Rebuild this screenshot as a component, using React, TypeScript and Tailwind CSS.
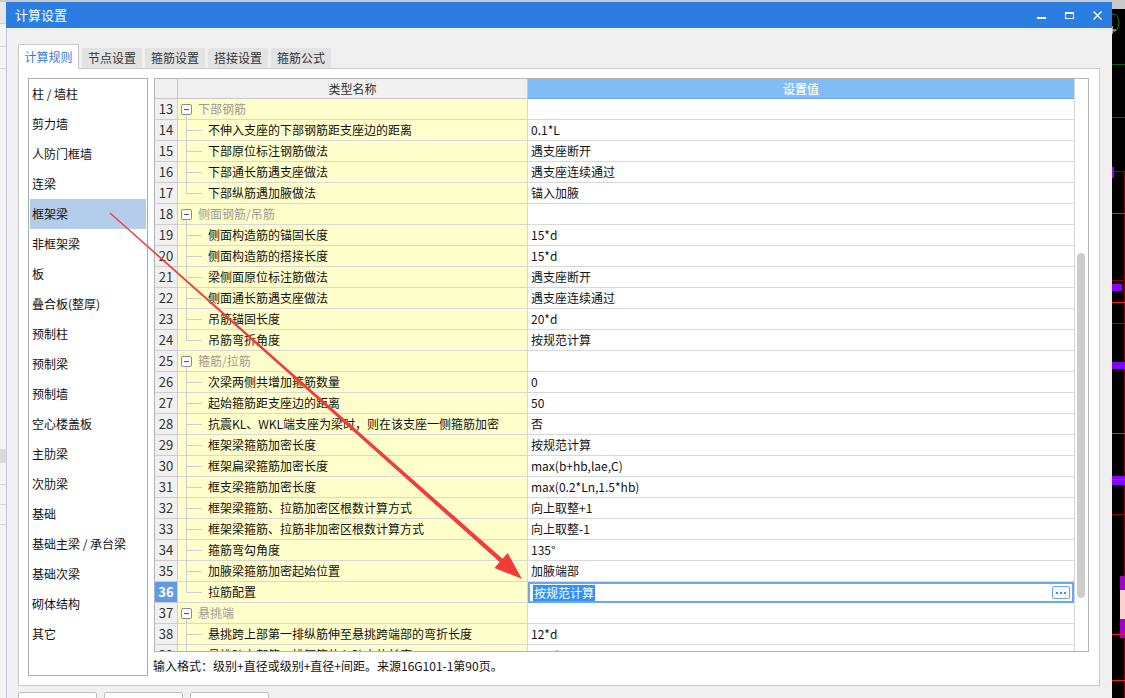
import React from 'react';

type Row = {
  n: number;
  name: string;
  value?: string;
  group?: boolean;
  last?: boolean;
  selected?: boolean;
};

const rows: Row[] = [
  { n: 13, name: '下部钢筋', group: true },
  { n: 14, name: '不伸入支座的下部钢筋距支座边的距离', value: '0.1*L' },
  { n: 15, name: '下部原位标注钢筋做法', value: '遇支座断开' },
  { n: 16, name: '下部通长筋遇支座做法', value: '遇支座连续通过' },
  { n: 17, name: '下部纵筋遇加腋做法', value: '锚入加腋', last: true },
  { n: 18, name: '侧面钢筋/吊筋', group: true },
  { n: 19, name: '侧面构造筋的锚固长度', value: '15*d' },
  { n: 20, name: '侧面构造筋的搭接长度', value: '15*d' },
  { n: 21, name: '梁侧面原位标注筋做法', value: '遇支座断开' },
  { n: 22, name: '侧面通长筋遇支座做法', value: '遇支座连续通过' },
  { n: 23, name: '吊筋锚固长度', value: '20*d' },
  { n: 24, name: '吊筋弯折角度', value: '按规范计算', last: true },
  { n: 25, name: '箍筋/拉筋', group: true },
  { n: 26, name: '次梁两侧共增加箍筋数量', value: '0' },
  { n: 27, name: '起始箍筋距支座边的距离', value: '50' },
  { n: 28, name: '抗震KL、WKL端支座为梁时，则在该支座一侧箍筋加密', value: '否' },
  { n: 29, name: '框架梁箍筋加密长度', value: '按规范计算' },
  { n: 30, name: '框架扁梁箍筋加密长度', value: 'max(b+hb,lae,C)' },
  { n: 31, name: '框支梁箍筋加密长度', value: 'max(0.2*Ln,1.5*hb)' },
  { n: 32, name: '框架梁箍筋、拉筋加密区根数计算方式', value: '向上取整+1' },
  { n: 33, name: '框架梁箍筋、拉筋非加密区根数计算方式', value: '向上取整-1' },
  { n: 34, name: '箍筋弯勾角度', value: '135°' },
  { n: 35, name: '加腋梁箍筋加密起始位置', value: '加腋端部' },
  { n: 36, name: '拉筋配置', value: '按规范计算', last: true, selected: true },
  { n: 37, name: '悬挑端', group: true },
  { n: 38, name: '悬挑跨上部第一排纵筋伸至悬挑跨端部的弯折长度', value: '12*d' },
  { n: 39, name: '悬挑跨上部第二排钢筋伸入跨内的长度', value: '0.75*L' },
];

const categories = [
  '柱 / 墙柱',
  '剪力墙',
  '人防门框墙',
  '连梁',
  '框架梁',
  '非框架梁',
  '板',
  '叠合板(整厚)',
  '预制柱',
  '预制梁',
  '预制墙',
  '空心楼盖板',
  '主肋梁',
  '次肋梁',
  '基础',
  '基础主梁 / 承台梁',
  '基础次梁',
  '砌体结构',
  '其它',
];

const tabs = ['计算规则', '节点设置', '箍筋设置', '搭接设置', '箍筋公式'];

function NameCell({ row }: { row: Row }) {
  if (row.group) {
    return (
      <div className="relative w-[350px] h-full bg-[#ffffcc] border-r border-b border-[#d8d8d8] pl-[20px] text-[#9a9a9a] leading-[20px]">
        <div className="absolute left-[3px] top-[5px] w-[11px] h-[11px] border border-[#8c8c8c] rounded-[2px] bg-white flex items-center justify-center">
          <div className="w-[5px] h-px bg-[#555]" />
        </div>
        <div className="absolute left-[8px] top-[16px] w-px h-[5px] bg-[#cfcfcf]" />
        {row.name}
      </div>
    );
  }
  return (
    <div className="relative w-[350px] h-full bg-[#ffffcc] border-r border-b border-[#d8d8d8] pl-[30px] text-[#111] leading-[20px] whitespace-nowrap">
      <div className={`absolute left-[8px] top-0 w-px bg-[#cfcfcf] ${row.last ? 'h-[10px]' : 'h-[21px]'}`} />
      <div className="absolute left-[8px] top-[10px] w-[16px] h-px bg-[#cfcfcf]" />
      {row.name}
    </div>
  );
}

function GridRow({ row }: { row: Row }) {
  return (
    <div className="flex h-[21px] shrink-0">
      <div
        className={`w-[23px] h-full border-r border-b border-[#cdcdcd] text-center text-[13px] leading-[20px] ${
          row.selected ? 'bg-[#5b9de9] text-white font-bold' : 'bg-[#f0f0f0] text-[#333]'
        }`}
      >
        {row.n}
      </div>
      <NameCell row={row} />
      {row.selected ? (
        <div className="flex-1 h-full border-2 border-[#6aa8ea] bg-white flex items-center pl-[3px] pr-[2px]">
          <span className="bg-[#3390ff] text-white leading-[16px] px-px">{row.value}</span>
          <div className="ml-auto w-[18px] h-[13px] border border-[#6aa8ea] rounded-[2px] bg-[#f4f8ff] flex items-center justify-center gap-[2px]">
            <div className="w-[2px] h-[2px] bg-[#4a8ad8]" />
            <div className="w-[2px] h-[2px] bg-[#4a8ad8]" />
            <div className="w-[2px] h-[2px] bg-[#4a8ad8]" />
          </div>
        </div>
      ) : (
        <div className="flex-1 h-full bg-white border-b border-[#d8d8d8] pl-[3px] leading-[20px] text-[#111]">
          {row.value}
        </div>
      )}
    </div>
  );
}

function LeftStrip() {
  return (
    <div className="w-[6px] shrink-0 flex flex-col bg-[#f4f4f4]">
      <div className="h-[2px] shrink-0 bg-[#c9c9c9]" />
      <div className="h-[22px] shrink-0 bg-[#e6e6e6] border-b border-[#cfcfcf]" />
      <div className="h-[23px] shrink-0 border-b border-[#d6d6d6]" />
      <div className="h-[22px] shrink-0 border-b border-[#d6d6d6]" />
      <div className="h-[380px] shrink-0" />
      <div className="h-[14px] shrink-0 bg-[#d9d9d9]" />
      <div className="h-[22px] shrink-0 border-b border-[#d6d6d6]" />
      <div className="h-[20px] shrink-0 border-b border-[#d6d6d6]" />
      <div className="h-[20px] shrink-0 border-b border-[#d6d6d6]" />
    </div>
  );
}

function RightStrip() {
  return (
    <div className="relative flex-1 bg-black overflow-hidden">
      <div className="h-[9px] bg-[#c9c9c9]" />
      <svg className="absolute left-[-5px] top-[12px]" width="14" height="22" viewBox="0 0 14 22">
        <ellipse cx="6" cy="11" rx="6" ry="9" fill="none" stroke="#1a8a1a" strokeWidth="1" />
        <path d="M5 14 V22 M1 18 H9" stroke="#fff" strokeWidth="1.2" />
      </svg>
      <div className="absolute left-0 right-0 top-[64px] h-px bg-[#0b5e0b]" />
      <div className="absolute left-0 right-0 top-[117px] h-px bg-[#0b5e0b]" />
      <div className="absolute right-0 top-[171px] bottom-0 w-px bg-[#8b0000]" />
      <div className="absolute left-0 right-0 top-[171px] h-px bg-[#8b0000]" />
      <div className="absolute left-0 top-[167px] w-[2px] h-[11px] bg-[#8a00ff]" />
      <div className="absolute left-0 right-0 top-[213px] h-px bg-[#ff1a1a]" />
      <div className="absolute left-0 right-0 top-[280px] h-px bg-[#8b0000]" />
      <div className="absolute left-0 top-[284px] w-[10px] h-[7px] bg-[#8a00ff]" />
      <div className="absolute left-0 right-0 top-[302px] h-px bg-[#ff1a1a]" />
      <div className="absolute left-0 right-0 top-[323px] h-px bg-[#b00000]" />
      <div className="absolute left-0 right-0 top-[362px] h-[7px] bg-[#8a00ff]" />
      <div className="absolute left-0 right-0 top-[433px] h-px bg-[#ff1a1a]" />
      <div className="absolute left-0 right-0 top-[476px] h-[9px] bg-[#8a00ff]" />
      <div className="absolute left-0 right-0 top-[479px] h-px bg-[#ff1a1a]" />
      <div className="absolute left-0 right-0 top-[514px] h-px bg-[#8b0000]" />
      <div className="absolute right-0 top-[576px] w-[5px] h-[62px] bg-[#a000c8]" />
      <div className="absolute right-0 top-[590px] w-[5px] h-[29px] bg-[#ffd0d0]" />
      <div className="absolute left-0 right-0 top-[634px] h-px bg-[#ff1a1a]" />
      <div className="absolute left-0 right-0 top-[680px] h-px bg-[#ff1a1a]" />
    </div>
  );
}

export default function App() {
  return (
    <div className="relative w-[1125px] h-[698px] overflow-hidden flex bg-black text-[12px] font-['Noto_Sans_CJK_SC',sans-serif]">
      <LeftStrip />

      <div className="w-[1106px] shrink-0 flex flex-col bg-[#f0f0f0] overflow-hidden">
        <div className="h-[2px] shrink-0 bg-[#c9c9c9]" />
        <div className="h-[26px] shrink-0 bg-[#2b7de1] flex items-center pl-[9px] pr-[10px] text-white">
          <span className="text-[13px]">计算设置</span>
          <div className="ml-auto flex items-center gap-[19px]">
            <svg width="9" height="9" viewBox="0 0 9 9">
              <rect x="0" y="6" width="9" height="2" fill="#fff" />
            </svg>
            <svg width="9" height="9" viewBox="0 0 9 9">
              <rect x="0.5" y="1.5" width="8" height="6" fill="none" stroke="#fff" strokeWidth="1" />
              <rect x="0" y="1" width="9" height="2" fill="#fff" />
            </svg>
            <svg width="9" height="9" viewBox="0 0 9 9">
              <path d="M0.5 0.5 L8.5 8.5 M8.5 0.5 L0.5 8.5" stroke="#fff" strokeWidth="1.4" />
            </svg>
          </div>
        </div>

        <div className="shrink-0 flex flex-col pt-[16px] pl-[11px] pr-[12px] border-l border-[#c5cbd6]">
          {/* tabs */}
          <div className="flex items-end gap-[3px] h-[24px] shrink-0">
            {tabs.map((t, i) =>
              i === 0 ? (
                <div
                  key={t}
                  className="relative z-10 w-[61px] h-[25px] -mb-px bg-white border border-b-0 border-[#c9c9c9] rounded-t-[2px] flex items-center justify-center text-[#2f80da]"
                >
                  {t}
                </div>
              ) : (
                <div
                  key={t}
                  className="w-[60px] h-[20px] bg-[#e3e3e3] rounded-t-[2px] flex items-center justify-center text-[#333]"
                >
                  {t}
                </div>
              )
            )}
          </div>

          {/* panel */}
          <div className="h-[618px] shrink-0 border border-[#c9c9c9] bg-white pt-[9px] pl-[9px] pr-[10px] flex gap-[6px]">
            <div className="w-[120px] h-[598px] border border-[#adadad] flex flex-col overflow-hidden">
              {categories.map((c) => (
                <div
                  key={c}
                  className={`mx-px pl-[2px] h-[30px] shrink-0 flex items-center text-[#111] ${
                    c === '框架梁' ? 'bg-[#b3cdea]' : ''
                  }`}
                >
                  {c}
                </div>
              ))}
            </div>

            <div className="flex-1 flex flex-col">
              <div className="h-[574px] shrink-0 border border-[#b4b4b4] flex overflow-hidden">
                <div className="flex-1 flex flex-col overflow-hidden">
                  <div className="flex h-[20px] shrink-0">
                    <div className="w-[23px] h-full bg-[#f0f0f0] border-r border-b border-[#c8c8c8]" />
                    <div className="w-[350px] h-full bg-[#f0f0f0] border-r border-b border-[#c8c8c8] text-center leading-[19px] text-[#333]">
                      类型名称
                    </div>
                    <div className="flex-1 h-full bg-[#80bcf6] border-b border-[#68a6e8] text-center leading-[19px] text-white font-medium">
                      设置值
                    </div>
                  </div>
                  {rows.map((r) => (
                    <GridRow key={r.n} row={r} />
                  ))}
                </div>
                <div className="w-[14px] border-l border-[#d6d6d6] bg-white flex flex-col">
                  <div className="mt-[174px] ml-[2px] w-[8px] h-[345px] shrink-0 rounded-full bg-[#cdcdcd]" />
                </div>
              </div>
              <div className="mt-[6px] -ml-px leading-[16px] text-[#111]">
                输入格式：级别+直径或级别+直径+间距。来源16G101-1第90页。
              </div>
            </div>
          </div>

          {/* bottom buttons */}
          <div className="mt-[6px] flex gap-[7px] shrink-0">
            <div className="w-[79px] h-[24px] border border-[#c0c0c0] bg-[#fdfdfd] rounded-[2px]" />
            <div className="w-[79px] h-[24px] border border-[#c0c0c0] bg-[#fdfdfd] rounded-[2px]" />
            <div className="w-[79px] h-[24px] border border-[#c0c0c0] bg-[#fdfdfd] rounded-[2px]" />
          </div>
        </div>
      </div>

      <RightStrip />

      <svg className="absolute inset-0 pointer-events-none" width="1125" height="698" viewBox="0 0 1125 698">
        <polygon
          points="110.4,212.55 502.53,558.76 507.71,552.92 522,579 494.43,567.88 499.61,562.04 109.6,213.45"
          fill="#f23c3a"
        />
      </svg>
    </div>
  );
}
